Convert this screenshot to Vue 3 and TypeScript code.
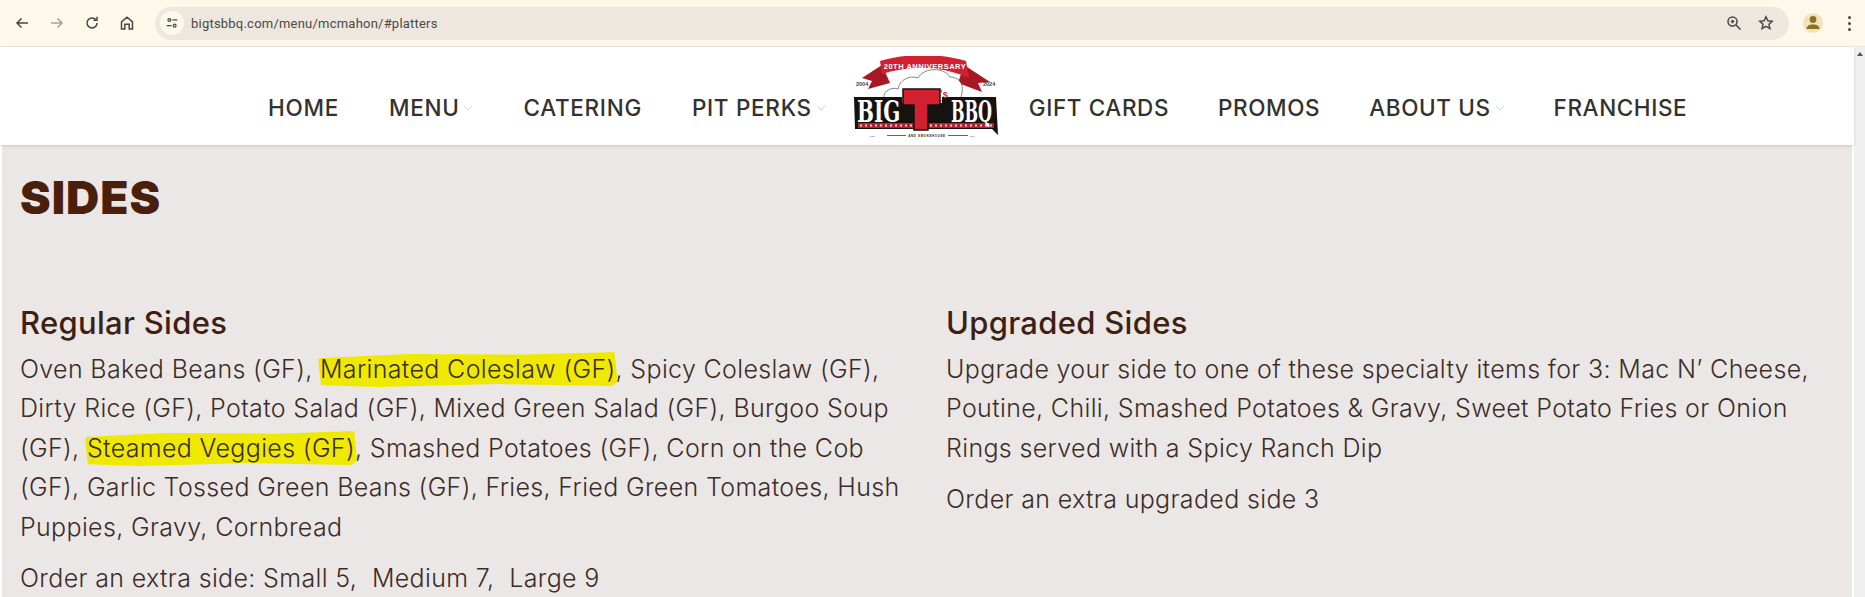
<script setup lang="ts">
const leftNav = [
  { label: 'HOME', caret: false },
  { label: 'MENU', caret: true },
  { label: 'CATERING', caret: false },
  { label: 'PIT PERKS', caret: true },
]
const rightNav = [
  { label: 'GIFT CARDS', caret: false },
  { label: 'PROMOS', caret: false },
  { label: 'ABOUT US', caret: true },
  { label: 'FRANCHISE', caret: false },
]
</script>

<template>
  <div class="page">
    <header class="chrome">
      <div class="tools">
        <svg class="ic" viewBox="0 0 16 16"><path d="M14 8H3M7.500 3.500 3 8l4.500 4.500" /></svg>
        <svg class="ic dim" viewBox="0 0 16 16"><path d="M2 8h11M8.500 3.500 13 8l-4.500 4.500" /></svg>
        <svg class="ic" viewBox="0 0 16 16"><path d="M13 8a5 5 0 1 1-1.500-3.600M13 1.800v3.400H9.600" /></svg>
        <svg class="ic" viewBox="0 0 16 16"><path d="M2.500 14V6.800L8 2.200l5.500 4.600V14h-3.300V9.300H5.800V14z" /></svg>
      </div>
      <div class="omnibox">
        <span class="site">
          <svg viewBox="0 0 16 16"><circle cx="5" cy="4.500" r="1.600" /><path d="M8.500 4.500H14M2 11h5.500" /><circle cx="11" cy="11" r="1.600" /></svg>
        </span>
        <span class="url">bigtsbbq.com/menu/mcmahon/#platters</span>
        <svg class="ic zoom" viewBox="0 0 16 16"><circle cx="6.500" cy="6.500" r="4.500" /><path d="m10 10 4.500 4.500M4.700 6.500h3.600M6.500 4.700v3.600" /></svg>
        <svg class="ic star" viewBox="0 0 16 16"><path d="m8 1.800 1.900 4 4.300.5-3.200 3 .9 4.300L8 11.400l-3.900 2.200.9-4.300-3.200-3 4.300-.5z" /></svg>
      </div>
      <span class="avatar">
        <svg viewBox="0 0 20 20"><circle cx="10" cy="6.500" r="3.400" /><path d="M3.500 16c0-3.200 3-4.600 6.500-4.600s6.500 1.400 6.500 4.600z" /></svg>
      </span>
      <span class="dots"><i></i><i></i><i></i></span>
    </header>

    <div class="viewport">
      <div class="site-body">
        <nav class="nav">
          <a v-for="n in leftNav" :key="n.label" class="nav-item">
            {{ n.label }}<svg v-if="n.caret" class="caret" viewBox="0 0 10 6"><path d="m1 1 4 4 4-4" /></svg>
          </a>
          <div class="logo">
            <svg viewBox="13 11 147 84" width="147" height="84">
              <path class="red dark" d="M42 20 L22 33 L32 36 L28 44 L50 38 Z M124 20 L150 37 L138 38 L142 47 L118 38 Z" />
              <path class="red" d="M40 16 C68 8 98 8 126 16 L129 33 C100 20 70 20 42 29 Z" />
              <text class="anniv" x="85" y="24" text-anchor="middle">20TH ANNIVERSARY</text>
              <text class="year" x="16" y="41">2004</text>
              <text class="year" x="143" y="41">2024</text>
              <path class="cloud" d="M44 52 C44 45 52 42 58 44 C60 34 70 30 78 33 C84 22 104 22 110 32 C118 32 124 38 122 48 L120 56 L46 56 Z" />
              <path class="black" d="M14 52 H62 V58 H102 V52 H156 L158 90 L152 84 H15 Z" />
              <rect class="band" x="18" y="78" width="136" height="5" />
              <path class="dashes" d="M20 80.500H154" />
              <text class="big" transform="translate(17 77) scale(1 1.45)">BIG</text>
              <text class="big" transform="translate(111 77) scale(.8 1.45)">BBQ</text>
              <path class="red outlined" d="M63 44 H100 V60 H88 V85 H74 V60 H63 Z" />
              <text class="tees" x="100" y="53">'s</text>
              <path class="rule" d="M47 90.500H66M108 90.500H128" />
              <text class="smoke" x="87" y="92" text-anchor="middle">AND SMOKEHOUSE</text>
              <text class="smoke" x="30" y="92">▪▪▪</text>
              <text class="smoke" x="130" y="92">▪▪▪</text>
            </svg>
          </div>
          <a v-for="n in rightNav" :key="n.label" class="nav-item tight">
            {{ n.label }}<svg v-if="n.caret" class="caret" viewBox="0 0 10 6"><path d="m1 1 4 4 4-4" /></svg>
          </a>
        </nav>

        <main class="content">
          <h1 class="title">SIDES</h1>
          <div class="columns">
            <section class="col">
              <h2>Regular Sides</h2>
              <p>
                Oven Baked Beans (GF), <mark>Marinated Coleslaw (GF)</mark>, Spicy Coleslaw (GF),<br />
                Dirty Rice (GF), Potato Salad (GF), Mixed Green Salad (GF), Burgoo Soup<br />
                (GF), <mark class="second">Steamed Veggies (GF)</mark>, Smashed Potatoes (GF), Corn on the Cob<br />
                (GF), Garlic Tossed Green Beans (GF), Fries, Fried Green Tomatoes, Hush<br />
                Puppies, Gravy, Cornbread
              </p>
              <p>Order an extra side: Small 5,&nbsp; Medium 7,&nbsp; Large 9</p>
            </section>
            <section class="col">
              <h2>Upgraded Sides</h2>
              <p>
                Upgrade your side to one of these specialty items for 3: Mac N’ Cheese,<br />
                Poutine, Chili, Smashed Potatoes &amp; Gravy, Sweet Potato Fries or Onion<br />
                Rings served with a Spicy Ranch Dip
              </p>
              <p>Order an extra upgraded side 3</p>
            </section>
          </div>
        </main>
      </div>
      <div class="scroll"><span></span></div>
    </div>
  </div>
</template>

<style>
html, body { margin: 0; background: #fff; overflow: hidden; }
</style>

<style scoped>
.page { width: 1865px; height: 597px; overflow: hidden; display: flex; flex-direction: column; font-family: Inter, "Liberation Sans", sans-serif; }
.chrome { height: 46px; flex: none; display: flex; align-items: center; background: #fdf8ea; border-bottom: 1px solid #ece8dc; padding-left: 13px; }
.tools { display: flex; gap: 19px; width: 141px; flex: none; margin-left: 1px; }
.ic { width: 16px; height: 16px; fill: none; stroke: #4a4640; stroke-width: 1.5; flex: none; }
.ic.dim { stroke: #a5a29b; }
.omnibox { width: 1634px; height: 33px; border-radius: 17px; background: #ede7e0; display: flex; align-items: center; padding: 0 15px 0 5px; box-sizing: border-box; flex: none; }
.site { width: 24px; height: 24px; border-radius: 50%; background: #fdf8ea; display: flex; align-items: center; justify-content: center; flex: none; }
.site svg { width: 14px; height: 14px; fill: none; stroke: #4a4640; stroke-width: 1.4; }
.url { font: 13px Roboto, sans-serif; color: #4c4845; margin-left: 7px; flex: 1; letter-spacing: .22px; }
.zoom { margin-right: 16px; }
.avatar { width: 20px; height: 20px; border-radius: 50%; background: #f0e3b8; margin-left: 14px; display: flex; flex: none; }
.avatar svg { fill: #8b7222; width: 20px; height: 20px; }
.dots { display: flex; flex-direction: column; gap: 3px; margin-left: 25px; }
.dots i { width: 3px; height: 3px; border-radius: 50%; background: #4a4640; display: block; }

.viewport { flex: 1; display: flex; min-height: 0; }
.site-body { width: 1854px; flex: none; background: #fff; }
.nav { height: 98px; background: #fff; box-shadow: 0 1px 3px rgba(0,0,0,.14); display: flex; align-items: flex-start; padding-left: 268px; position: relative; }
.nav-item { display: flex; align-items: center; margin-top: 46px; font-size: 22.5px; line-height: 30px; font-weight: 500; color: #33322f; margin-right: 50px; white-space: nowrap; letter-spacing: .7px; }
.nav-item.tight { letter-spacing: .6px; margin-right: 49px; }
.caret { width: 10px; height: 6px; fill: none; stroke: #d3d3d3; stroke-width: 1; margin-left: 4px; }
.logo { flex: none; width: 147px; height: 84px; margin: 9px 29px 0 -23px; }
.red { fill: #d1202f; }
.red.dark { fill: #a81824; }
.cloud { fill: #fff; stroke: #555; stroke-width: .7; }
.black { fill: #15120f; }
.band { fill: #b7202b; }
.dashes { stroke: #f2d0d0; stroke-width: 2; stroke-dasharray: 2 3; fill: none; }
.rule { stroke: #222; stroke-width: .7; fill: none; }
.outlined { stroke: #15120f; stroke-width: 1.500; }
.year { font: 700 5.500px "Liberation Sans", sans-serif; fill: #444; }
.anniv { font: 800 7.500px "Liberation Sans", sans-serif; fill: #fff; letter-spacing: .5px; }
.big { font: 900 20px "DejaVu Serif", serif; fill: #fff; }
.tees { font: 900 10px "Liberation Sans", sans-serif; fill: #d1202f; }
.smoke { font: 700 3px "Liberation Sans", sans-serif; fill: #222; letter-spacing: .6px; }

.content { margin: 0 2px; background: #ebe7e7; height: 452px; padding: 24px 0 0 18px; color: #3c2a22; overflow: hidden; box-sizing: border-box; }
.title { margin: 0; font-size: 46px; line-height: 56px; font-weight: 900; color: #4a1f0c; letter-spacing: 1px; }
.columns { display: flex; margin-top: 78px; }
.col { width: 926px; flex: none; }
h2 { margin: 0 0 7px; font-size: 31px; line-height: 40px; font-weight: 500; color: #3e1f12; letter-spacing: .3px; }
p { margin: 0 0 12px; font-size: 25px; line-height: 39.400px; font-weight: 300; color: #3c2d27; white-space: nowrap; letter-spacing: .35px; }
mark { position: relative; z-index: 0; background: transparent; color: inherit; }
mark::before { content: ""; position: absolute; z-index: -1; inset: -1px -2px -3px -2px; background: #efe900; border-radius: 9px 6px 8px 5px; transform: rotate(-.4deg); clip-path: polygon(0 12%, 30% 2%, 70% 6%, 99% 0, 100% 90%, 98% 100%, 60% 92%, 20% 98%, 1% 92%); }
.scroll { flex: 1; background: #f0f0f0; }
.scroll span { display: block; margin: 5px auto 0; width: 0; height: 0; border: 3px solid transparent; border-bottom: 4px solid #555; border-top: 0; }
</style>
